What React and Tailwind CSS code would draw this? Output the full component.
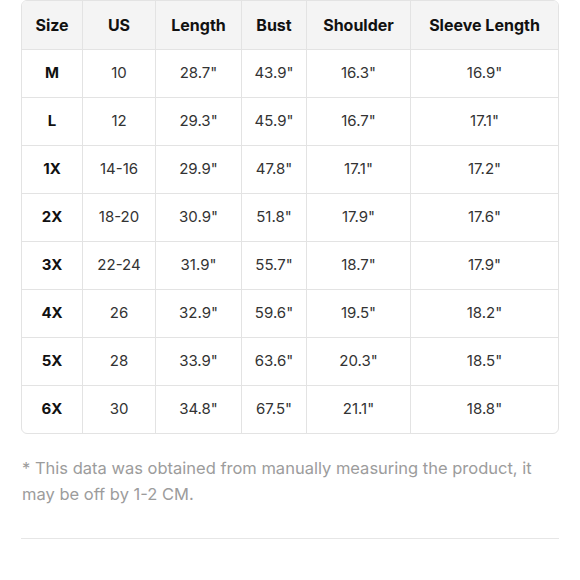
import React from 'react'

const rows = [
  ['M', '10', '28.7"', '43.9"', '16.3"', '16.9"'],
  ['L', '12', '29.3"', '45.9"', '16.7"', '17.1"'],
  ['1X', '14-16', '29.9"', '47.8"', '17.1"', '17.2"'],
  ['2X', '18-20', '30.9"', '51.8"', '17.9"', '17.6"'],
  ['3X', '22-24', '31.9"', '55.7"', '18.7"', '17.9"'],
  ['4X', '26', '32.9"', '59.6"', '19.5"', '18.2"'],
  ['5X', '28', '33.9"', '63.6"', '20.3"', '18.5"'],
  ['6X', '30', '34.8"', '67.5"', '21.1"', '18.8"'],
]

const headers = ['Size', 'US', 'Length', 'Bust', 'Shoulder', 'Sleeve Length']

export default function App() {
  return (
    <div className="min-h-screen bg-white font-['Inter',sans-serif] text-[#222]">
      <div className="ml-[21px] w-[538px]">
        <div className="rounded-md border border-[#e3e3e3] overflow-hidden">
          <div className="grid grid-cols-[60px_73px_86px_65px_104px_148px] bg-[#f4f4f4] h-[48px] items-stretch">
            {headers.map((h, i) => (
              <div
                key={h}
                className={`flex items-center justify-center text-[16px] font-bold text-[#111] ${i > 0 ? 'border-l border-[#e3e3e3]' : ''}`}
              >
                {h}
              </div>
            ))}
          </div>
          {rows.map((r) => (
            <div
              key={r[0]}
              className="grid grid-cols-[60px_73px_86px_65px_104px_148px] h-[48px] border-t border-[#e3e3e3]"
            >
              {r.map((c, i) => (
                <div
                  key={i}
                  className={`flex items-center justify-center text-[15px] ${i === 0 ? 'font-bold text-[#111]' : 'text-[#333]'} ${i > 0 ? 'border-l border-[#e3e3e3]' : ''}`}
                >
                  {c}
                </div>
              ))}
            </div>
          ))}
        </div>

        <p className="mt-[21px] pl-[1px] w-[520px] text-[16.5px] leading-[26px] text-[#9c9c9c]">
          * This data was obtained from manually measuring the product, it may be off by 1-2 CM.
        </p>

        <div className="mt-[31px] h-px bg-[#e6e6e6]" />
      </div>
    </div>
  )
}
